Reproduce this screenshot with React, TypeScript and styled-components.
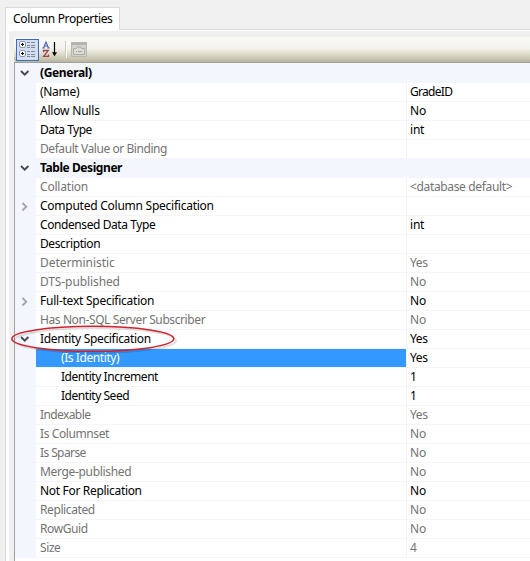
import React from "react";
import styled, { createGlobalStyle } from "styled-components";

const GlobalStyle = createGlobalStyle`
  html, body { margin: 0; padding: 0; }
  body { background: #f0f0f0; overflow: hidden; }
`;

const Window = styled.div`
  display: flex;
  flex-direction: column;
  box-sizing: border-box;
  width: 530px;
  height: 561px;
  padding: 7px 0 0 5px;
  background: #f0f0f0;
  color: #000;
  font: 12px/18px "Noto Sans", "Open Sans", sans-serif;
  white-space: nowrap;
  overflow: hidden;
`;

const TabBar = styled.div`
  display: flex;
  flex: none;
  height: 23px;
`;

const Tab = styled.div`
  box-sizing: border-box;
  width: 115px;
  padding: 2px 0 0 7px;
  border: 1px solid #dadada;
  border-bottom: 0;
  background: #fff;
  letter-spacing: -0.35px;
`;

const TabRule = styled.div`
  flex: 1;
  border-bottom: 1px solid #d9d9d9;
`;

const Page = styled.div`
  display: flex;
  flex: 1;
  min-height: 0;
  box-sizing: border-box;
  padding: 1px 0 0 3px;
  border-left: 1px solid #dcdcdc;
  background: #fff;
`;

const Panel = styled.div`
  display: flex;
  flex: 1;
  flex-direction: column;
  min-width: 0;
  padding: 6px 0 0 5px;
  background: #f0f0f0;
`;

const Toolbar = styled.div`
  display: flex;
  flex: none;
  align-items: center;
  box-sizing: border-box;
  height: 25px;
  padding: 1px 0 1px 2px;
  border-radius: 3px 0 0 3px;
  background: linear-gradient(#fafaf7 0%, #f4f3ec 45%, #dcdac8 70%, #b9b79f 100%);
`;

const ToolButton = styled.div<{ $active?: boolean }>`
  display: flex;
  align-items: center;
  justify-content: center;
  box-sizing: border-box;
  width: 23px;
  height: 22px;
  border: 1px solid ${(p) => (p.$active ? "#3c6cc0" : "transparent")};
  background: ${(p) => (p.$active ? "#d3def1" : "transparent")};
`;

const Separator = styled.div`
  width: 1px;
  height: 17px;
  margin: 0 0 0 3px;
  border-right: 1px solid #fff;
  background: #cbc9b8;
`;

const Grid = styled.div`
  flex: 1;
  padding-top: 1px;
  border-top: 1px solid #a0a096;
  border-left: 1px solid #a0a0a0;
  background: linear-gradient(#f3f6fc 0 1px, #fff 1px);
`;

const Line = styled.div<{ $category?: boolean }>`
  display: grid;
  grid-template-columns: 21px 370px 1fr;
  height: 19px;
  background: ${(p) => (p.$category ? "#f3f6fc" : "#fff")};
  font-weight: ${(p) => (p.$category ? 700 : 400)};
`;

const Gutter = styled.div`
  display: flex;
  align-items: center;
  padding: 0 0 2px 5px;
  background: #f3f6fc;
`;

const Cell = styled.div<{
  $muted?: boolean;
  $selected?: boolean;
  $nested?: boolean;
  $category?: boolean;
}>`
  box-sizing: border-box;
  height: 19px;
  padding-left: ${(p) => (p.$nested ? 25 : 4)}px;
  border-bottom: 1px solid #f3f5fa;
  background: ${(p) => (p.$selected ? "#3399ff" : "transparent")};
  background-clip: padding-box;
  color: ${(p) => (p.$selected ? "#fff" : p.$muted ? "#737373" : "#000")};
`;

const Value = styled(Cell)`
  padding-left: 3px;
  border-left: 1px solid ${(p) => (p.$category ? "transparent" : "#f1f3f8")};
`;

const Label = styled.span<{ $track: number }>`
  letter-spacing: ${(p) => p.$track}px;
`;

const Callout = styled.svg`
  position: absolute;
  left: 8px;
  top: 322px;
  pointer-events: none;
`;

const CategorizedIcon = () => (
  <svg width="17" height="17" viewBox="0 0 17 17" fill="none">
    {[1, 10].map((y) => (
      <g key={y}>
        <rect x=".5" y={y - 0.5} width="6" height="6" rx="1.5" fill="#fff" stroke="#8b98ab" />
        <path d={`M2 ${y + 2.5}h3M3.5 ${y + 1}v3`} stroke="#000" strokeWidth="1.2" />
        <path
          d={`M8 ${y + 0.5}h3M12 ${y + 0.5}h4M8 ${y + 3.5}h3M12 ${y + 3.5}h4M8 ${y + 5.5}h3M12 ${y + 5.5}h4`}
          stroke="#7f8997"
        />
      </g>
    ))}
  </svg>
);

const SortIcon = () => (
  <svg width="17" height="17" viewBox="0 0 17 17" fill="none">
    <path d="M1.5 7 4 1l2.5 6M2.5 5h3M.3 7h2.4M5.3 7h2.4" stroke="#4a60b0" strokeWidth="1.1" />
    <path d="M1.5 11.2V9.5h4.8L1.7 15.3h4.8V13.6" stroke="#a04350" strokeWidth="1.3" />
    <path d="M12.5 1v12" stroke="#000" strokeWidth="1.2" />
    <path d="M10 11.2h5l-2.5 4z" fill="#000" />
  </svg>
);

const PagesIcon = () => (
  <svg width="16" height="15" viewBox="0 0 16 15" fill="none">
    <rect x=".5" y=".5" width="15" height="14" fill="#d3d2cb" stroke="#b6b5ae" />
    <path d="M1 2h14" stroke="#b3b2ac" strokeWidth="2" />
    <path d="M2.5 6.5h3l1-1.5h3l1 1.5h3v6h-11z" fill="#dddcd5" stroke="#adaca5" />
    <path d="M5 9.5h1m1 0h4" stroke="#a09f97" />
  </svg>
);

const Chevron = ({ open }: { open: boolean }) => (
  <svg width="10" height="10" viewBox="0 0 10 10" fill="none">
    <path
      d={open ? "M1 3l3.7 3.7L8.4 3" : "M2.5 2l3.7 3.7L2.5 9.4"}
      stroke={open ? "#454a52" : "#a3a5a8"}
      strokeWidth="1.9"
    />
  </svg>
);

type Row = {
  name: string;
  value?: string;
  category?: boolean;
  muted?: boolean;
  nested?: boolean;
  selected?: boolean;
  open?: boolean;
  track?: number;
};

const rows: Row[] = [
  { name: "(General)", category: true, open: true, track: -0.35 },
  { name: "(Name)", value: "GradeID", track: -0.3 },
  { name: "Allow Nulls", value: "No", track: -0.2 },
  { name: "Data Type", value: "int", track: -0.5 },
  { name: "Default Value or Binding", muted: true, track: -0.43 },
  { name: "Table Designer", category: true, open: true, track: -0.43 },
  { name: "Collation", value: "<database default>", muted: true, track: -0.2 },
  { name: "Computed Column Specification", open: false, track: -0.25 },
  { name: "Condensed Data Type", value: "int", track: -0.42 },
  { name: "Description", track: -0.4 },
  { name: "Deterministic", value: "Yes", muted: true, track: -0.05 },
  { name: "DTS-published", value: "No", muted: true, track: -0.1 },
  { name: "Full-text Specification", value: "No", open: false, track: -0.24 },
  { name: "Has Non-SQL Server Subscriber", value: "No", muted: true, track: -0.4 },
  { name: "Identity Specification", value: "Yes", open: true, track: -0.33 },
  { name: "(Is Identity)", value: "Yes", nested: true, selected: true, track: -0.42 },
  { name: "Identity Increment", value: "1", nested: true, track: -0.45 },
  { name: "Identity Seed", value: "1", nested: true, track: -0.46 },
  { name: "Indexable", value: "Yes", muted: true, track: -0.6 },
  { name: "Is Columnset", value: "No", muted: true, track: -0.4 },
  { name: "Is Sparse", value: "No", muted: true, track: -0.6 },
  { name: "Merge-published", value: "No", muted: true, track: -0.33 },
  { name: "Not For Replication", value: "No", track: -0.32 },
  { name: "Replicated", value: "No", muted: true, track: -0.4 },
  { name: "RowGuid", value: "No", muted: true, track: -0.4 },
  { name: "Size", value: "4", muted: true, track: -0.4 },
];

const valueTrack: Record<string, number> = {
  GradeID: -0.7,
  Yes: -0.4,
  int: -0.2,
  "<database default>": -0.35,
};

export default function App() {
  return (
    <Window>
      <GlobalStyle />
      <TabBar>
        <Tab>Column Properties</Tab>
        <TabRule />
      </TabBar>
      <Page>
        <Panel>
          <Toolbar>
            <ToolButton $active>
              <CategorizedIcon />
            </ToolButton>
            <ToolButton>
              <SortIcon />
            </ToolButton>
            <Separator />
            <ToolButton>
              <PagesIcon />
            </ToolButton>
          </Toolbar>
          <Grid>
            {rows.map((r) => (
              <Line key={r.name} $category={r.category}>
                <Gutter>{r.open !== undefined && <Chevron open={r.open} />}</Gutter>
                <Cell $muted={r.muted} $selected={r.selected} $nested={r.nested}>
                  <Label $track={r.track ?? 0}>{r.name}</Label>
                </Cell>
                <Value $muted={r.muted} $category={r.category}>
                  {r.value && <Label $track={valueTrack[r.value] ?? 0}>{r.value}</Label>}
                </Value>
              </Line>
            ))}
          </Grid>
        </Panel>
      </Page>
      <Callout width="176" height="36" viewBox="0 0 176 36" fill="none">
        <ellipse cx="87" cy="18.5" rx="81" ry="12.5" stroke="#000" strokeOpacity=".12" strokeWidth="2" />
        <ellipse cx="84.8" cy="16.8" rx="81" ry="12.5" stroke="#d3222c" strokeWidth="1.5" />
      </Callout>
    </Window>
  );
}
